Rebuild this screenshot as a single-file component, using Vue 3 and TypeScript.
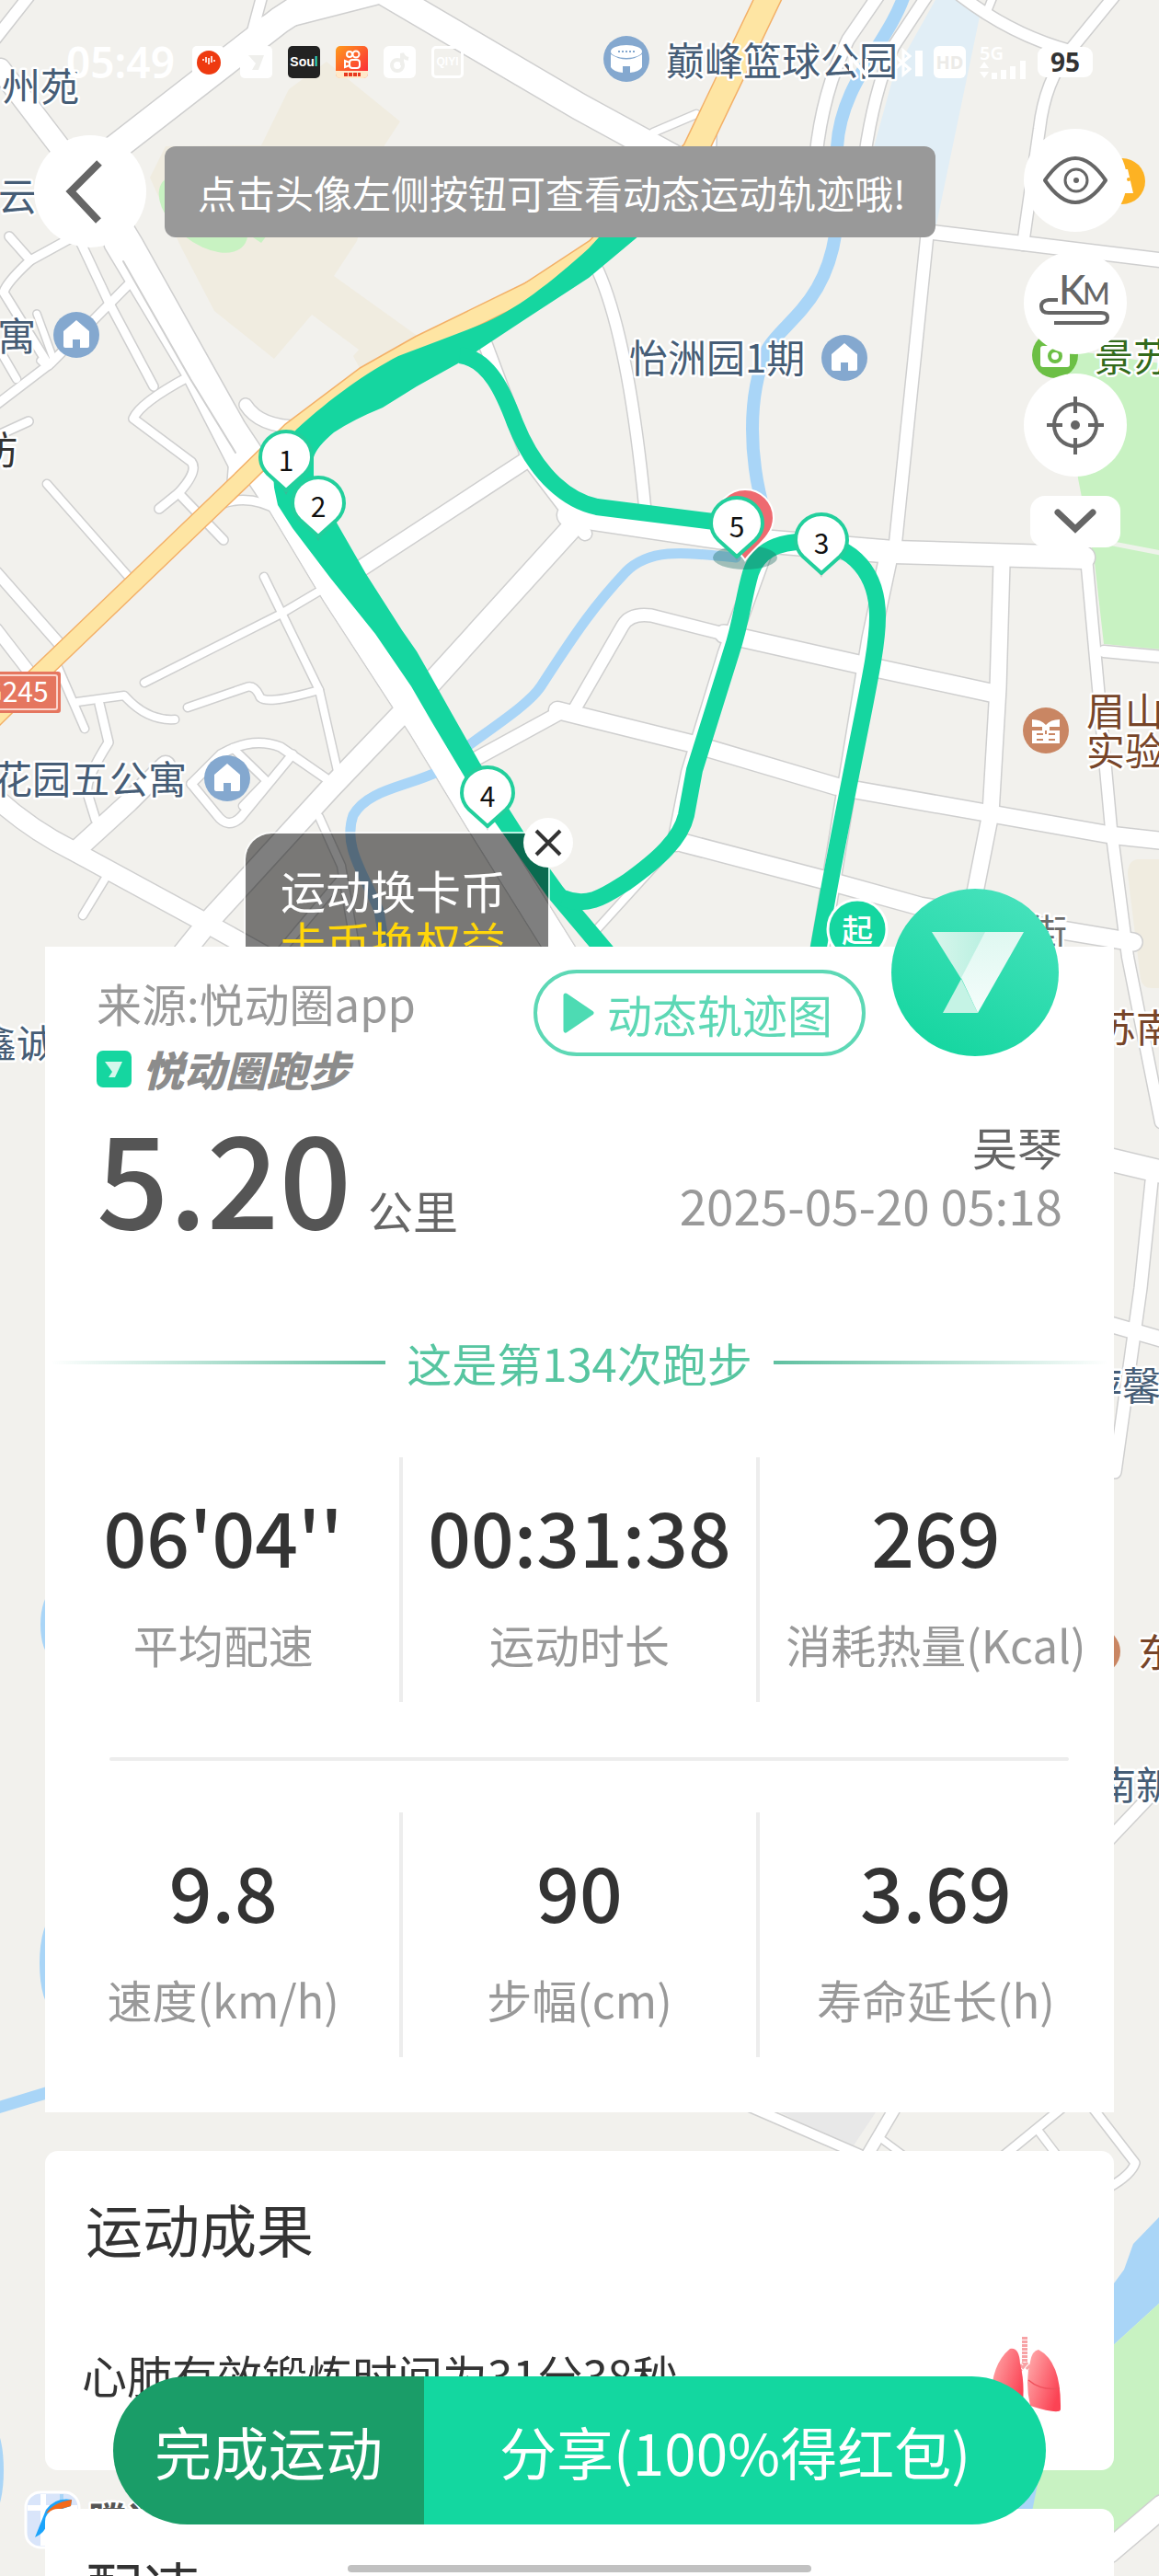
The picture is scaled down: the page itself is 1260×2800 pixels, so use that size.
<script setup lang="ts">
interface Road { d: string; w: number }
interface Label { x: number; y: number; text: string; tone: string }
interface Pin { x: number; y: number; n: number }
interface Stat { value: string; label: string }

const roads: Road[] = [
  { d: 'M32 -5L-5 42', w: 12 },
  { d: 'M285 -5L274 36', w: 11 },
  { d: 'M0 75L65 160L100 230', w: 22 },
  { d: 'M10 257L33 283Q6 308 4 318L53 397', w: 9 },
  { d: 'M75 260L33 283', w: 9 },
  { d: 'M40 341L58 390Q53 402 44 392', w: 7 },
  { d: 'M-4 440L55 395L143 306', w: 9 },
  { d: 'M-4 374L18 412', w: 8 },
  { d: 'M86 260L118 328L167 420', w: 9 },
  { d: 'M120 267L204 407L262 520', w: 12 },
  { d: 'M204 410Q152 438 145 455L208 502Q216 512 194 536L173 553', w: 9 },
  { d: 'M194 536L243 587', w: 9 },
  { d: 'M31 458L-4 474', w: 9 },
  { d: 'M267 440Q282 464 325 464', w: 13 },
  { d: 'M256 480L252 530', w: 10 },
  { d: 'M240 548Q272 536 305 556', w: 9 },
  { d: 'M51 526L139 626', w: 8 },
  { d: 'M-4 622L63 698', w: 11 },
  { d: 'M-4 684L30 728', w: 12 },
  { d: 'M62 723L92 792', w: 8 },
  { d: 'M84 763L135 756Q160 784 190 782', w: 8 },
  { d: 'M108 765L118 807Q92 848 95 862L104 891', w: 9 },
  { d: 'M157 742L304 668L353 639', w: 8 },
  { d: 'M287 627L347 750L367 838', w: 8 },
  { d: 'M204 769L268 747Q276 744 282 756Q284 768 347 750', w: 8 },
  { d: 'M208 852L240 820Q274 800 305 812L360 850', w: 9 },
  { d: 'M318 820L262 888Q248 902 236 886L208 852', w: 9 },
  { d: 'M253 813L290 849L264 876', w: 8 },
  { d: 'M180 832L140 872L82 925', w: 20 },
  { d: 'M-4 868Q34 902 78 924L229 1006L290 1040', w: 20 },
  { d: 'M118 949L90 995', w: 8 },
  { d: 'M347 888L371 941L388 1040', w: 8 },
  { d: 'M371 955L300 1040', w: 8 },
  { d: 'M392 618L571 501', w: 17 },
  { d: 'M528 375L575 500L636 580', w: 14 },
  { d: 'M634 560L469 742L359 857L229 999L196 1040', w: 22 },
  { d: 'M515 826L612 773', w: 14 },
  { d: 'M606 772L755 809L910 855L1069 883L1210 908L1264 914', w: 18 },
  { d: 'M624 772L677 680Q685 666 708 669L787 689', w: 13 },
  { d: 'M787 689L938 723L1077 753', w: 19 },
  { d: 'M742 916L906 959L1000 985L1232 1024', w: 19 },
  { d: 'M738 912L640 1020', w: 8 },
  { d: 'M650 294Q684 370 702 560', w: 12 },
  { d: 'M618 560L780 584L971 600L1178 606', w: 24 },
  { d: 'M830 600L790 710L750 840L735 916', w: 18 },
  { d: 'M1008 255L973 595', w: 13 },
  { d: 'M967 600L947 694L906 944L890 1040', w: 19 },
  { d: 'M1089 612L1085 748L1077 884L1057 985', w: 17 },
  { d: 'M1181 606L1208 901L1226 1040L1262 1220', w: 12 },
  { d: 'M1200 708L1264 714', w: 12 },
  { d: 'M1010 252L1264 283', w: 15 },
  { d: 'M1163 55Q1136 88 1130 140L1112 266', w: 12 },
  { d: 'M1044 -5Q1100 38 1163 55L1212 -5', w: 12 },
  { d: 'M1074 10L1080 -5', w: 8 },
  { d: 'M955 -5L922 43Q894 100 887 170', w: 13 },
  { d: 'M1008 -5L971 51Q950 100 940 170', w: 12 },
  { d: 'M710 144L757 124', w: 8 },
  { d: 'M775 130L774 170', w: 8 },
  { d: 'M1205 1260L1264 1274', w: 24 },
  { d: 'M1252 1284L1240 1400L1212 1600', w: 13 },
  { d: 'M1205 1439L1264 1456', w: 16 },
  { d: 'M1205 2000L1262 1940', w: 13 },
  { d: 'M815 2290L935 2342', w: 10 },
  { d: 'M975 2288L942 2344', w: 12 },
  { d: 'M957 2324L984 2344', w: 7 },
  { d: 'M1156 2290L1090 2344', w: 9 },
  { d: 'M1128 2315L1150 2344', w: 8 },
  { d: 'M1187 2290L1234 2351Q1230 2364 1205 2378', w: 9 },
  { d: 'M1205 2774L1264 2724', w: 24 }
]

const wideRoads: Road[] = [
  { d: 'M98 182L304 22L350 -8', w: 28 },
  { d: 'M290 26L415 -6', w: 18 },
  { d: 'M412 -12L630 116L740 176', w: 28 },
  { d: 'M108 215L140 268L252 468L300 540', w: 32 },
  { d: 'M284 510L365 645L458 788L520 890L620 1050', w: 30 }
]

const yellowRoads: Road[] = [
  { d: 'M838 -8L755 165L650 272L580 318', w: 26 },
  { d: 'M650 272L580 314L457 374L397 408L316 469L264 520L40 735L-20 794', w: 18 }
]

const track = [
  'M500 386C532 390 548 428 560 460C584 520 620 545 649 551L800 570',
  'M612 976C640 988 660 972 681 959C716 934 740 912 746 886L755 837L795 709C806 676 808 650 816 623C826 592 858 588 881 589C930 592 954 626 954 670C954 712 940 760 902 962L888 1040'
]

const labels: Label[] = [
  { x: 724, y: 82, text: '巅峰篮球公园', tone: 'blue' },
  { x: 2, y: 110, text: '州苑', tone: 'blue' },
  { x: -44, y: 229, text: '凌云', tone: 'blue' },
  { x: -3, y: 381, text: '寓', tone: 'blue' },
  { x: -23, y: 505, text: '坊', tone: 'dark' },
  { x: 684, y: 405, text: '怡洲园1期', tone: 'blue' },
  { x: -7, y: 863, text: '花园五公寓', tone: 'blue' },
  { x: 1190, y: 404, text: '景苏', tone: 'green' },
  { x: 1181, y: 789, text: '眉山', tone: 'brown' },
  { x: 1181, y: 832, text: '实验', tone: 'brown' },
  { x: 1118, y: 1030, text: '街', tone: 'grey' },
  { x: 1193, y: 1133, text: '苏南', tone: 'brown' },
  { x: -24, y: 1150, text: '鑫诚', tone: 'blue' },
  { x: 1178, y: 1522, text: '萍馨', tone: 'blue' },
  { x: 1237, y: 1812, text: '东', tone: 'brown' },
  { x: 1193, y: 1956, text: '南新', tone: 'blue' }
]

const homes = [[83, 364], [918, 389], [247, 846]]

const pins: Pin[] = [
  { x: 311, y: 498, n: 1 },
  { x: 346, y: 548, n: 2 },
  { x: 893, y: 588, n: 3 },
  { x: 530, y: 863, n: 4 },
  { x: 801, y: 570, n: 5 }
]

const statRows: Stat[][] = [
  [
    { value: "06'04''", label: '平均配速' },
    { value: '00:31:38', label: '运动时长' },
    { value: '269', label: '消耗热量(Kcal)' }
  ],
  [
    { value: '9.8', label: '速度(km/h)' },
    { value: '90', label: '步幅(cm)' },
    { value: '3.69', label: '寿命延长(h)' }
  ]
]
</script>

<template>
  <div class="screen">
    <svg class="map" viewBox="0 0 1260 2800" preserveAspectRatio="xMidYMin slice" aria-hidden="true">
      <!-- land use -->
      <path fill="#f0ece0" d="M355 67L435 132L418 158L388 262L363 300L455 366L392 402L384 387L390 380L339 342L298 390L233 338L196 267L163 193L180 159L284 158L314 97Z" />
      <ellipse cx="221" cy="232" rx="56" ry="32" transform="rotate(38 221 232)" fill="#c8f2c2" />
      <path fill="#c8f2c2" d="M272 256L284 264L290 256Z" />
      <path fill="#e1eef6" d="M1018 -2H1042L1065 18L1018 244H980L950 160L972 80Z" />
      <path fill="#c8f2c2" d="M1160 380L1262 395V706L1200 700L1190 612L1172 520Z" />
      <path d="M1205 590L1262 601" stroke="#eef3ea" stroke-width="5" />
      <path fill="#f0ece0" d="M1262 934H1236Q1226 936 1226 950L1240 1064Q1242 1074 1252 1074H1262Z" />
      <path fill="#e8e8e8" d="M836 2290H956L926 2335Z" />
      <path fill="#a9d5f7" d="M1262 2408L1232 2439L1222 2467L1205 2490L1090 2700V2740H1124L1150 2660L1205 2554L1262 2502Z" />
      <path fill="#c8f2c2" d="M1262 2502L1205 2554L1134 2670L1121 2735L1200 2780L1262 2715Z" />

      <!-- streets -->
      <g fill="none" stroke-linecap="round" stroke-linejoin="round">
        <path v-for="r in roads" :key="'c' + r.d" :d="r.d" :stroke-width="r.w + 3" stroke="#cfcfcf" />
        <path v-for="r in wideRoads" :key="'c' + r.d" :d="r.d" :stroke-width="r.w + 3" stroke="#cfcfcf" />
        <path v-for="r in roads" :key="'f' + r.d" :d="r.d" :stroke-width="r.w" stroke="#fff" />
        <path v-for="r in wideRoads" :key="'f' + r.d" :d="r.d" :stroke-width="r.w" stroke="#fff" />
        <path d="M134 284L207 412L256 492" stroke="#cfcfcf" stroke-width="2" />
        <!-- water -->
        <g stroke="#a9d5f7">
          <path d="M983 -5C965 48 914 90 910 160V240C902 330 850 350 834 380C812 430 814 500 832 560" stroke-width="14" />
          <path d="M800 606C740 600 706 596 680 622C648 656 628 684 588 746C572 770 520 800 478 834" stroke-width="11" />
          <path d="M478 838C440 856 400 858 384 886C372 920 396 950 412 990L420 1040" stroke-width="11" />
          <path d="M-6 2292L60 2272" stroke-width="13" />
        </g>
        <path d="M284 510L365 645L458 788L520 890L620 1050" stroke="#fff" stroke-width="30" />
        <path v-for="r in yellowRoads" :key="'c' + r.d" :d="r.d" :stroke-width="r.w + 3" stroke="#f3b068" />
        <path v-for="r in yellowRoads" :key="'f' + r.d" :d="r.d" :stroke-width="r.w" stroke="#fee5a3" />
      </g>
      <ellipse cx="56" cy="1766" rx="12" ry="34" fill="#a9d5f7" />
      <ellipse cx="58" cy="2134" rx="15" ry="50" fill="#a9d5f7" />
      <ellipse cx="-6" cy="2685" rx="10" ry="44" fill="#a9d5f7" />

      <!-- road number -->
      <g>
        <rect x="-20" y="730" width="86" height="45" rx="3" fill="#e5765f" />
        <rect x="-20" y="734" width="82" height="37" rx="2" fill="none" stroke="#fbd5cc" stroke-width="2" />
        <text x="-18" y="763" font-size="30" fill="#fff">G245</text>
      </g>

      <!-- points of interest -->
      <g v-for="h in homes" :key="h[0]" :transform="`translate(${h[0]} ${h[1]})`">
        <circle r="25" fill="#84a8cf" />
        <path d="M0 -16L14 -4V12Q14 14 12 14H4V5H-4V14H-12Q-14 14 -14 12V-4Z" fill="#fff" />
      </g>
      <g transform="translate(681 64)">
        <circle r="25" fill="#84a8cf" />
        <path d="M-17 -5V9Q-14 14 -4 15V8H4V15Q14 14 17 9V-5Q0 6 -17 -5Z" fill="#fff" />
        <ellipse cy="-8" rx="17" ry="7" fill="#fff" />
        <path d="M-9 -8H9" stroke="#84a8cf" stroke-width="2" stroke-dasharray="2 2" />
      </g>
      <g transform="translate(1147 386)">
        <circle r="25" fill="#6cbf45" />
        <rect x="-16" y="-10" width="32" height="23" rx="3" fill="#fff" />
        <circle cy="1" r="6" fill="none" stroke="#6cbf45" stroke-width="4" />
      </g>
      <g transform="translate(1137 794)">
        <circle r="25" fill="#c98663" />
        <path d="M-15 -12Q-5 -12 0 -6Q5 -12 15 -12V-4H4V0H15V14H-15V0H-4V-4H-15Z" fill="#fff" />
        <path d="M-10 4H-3M3 4H10M-10 10H-3M3 10H10M0 0V4" stroke="#c98663" stroke-width="2" />
      </g>
      <circle cx="1220" cy="197" r="25" fill="#fdb223" />
      <path d="M1214 184H1226L1232 210H1214Z" fill="#fff" />
      <circle cx="1227" cy="195" r="2" fill="#fdb223" />
      <circle cx="1193" cy="1795" r="25" fill="#c98663" />

      <g class="labels">
        <text v-for="l in labels" :key="l.text" :x="l.x" :y="l.y" :class="l.tone">{{ l.text }}</text>
        <text x="96" y="2756" class="brand">腾讯地图</text>
      </g>
      <g>
        <rect x="28" y="2709" width="58" height="60" rx="16" fill="#d9e5fa" stroke="#fff" stroke-width="3" />
        <path d="M47 2711V2767M30 2726H84" stroke="#fff" stroke-width="6" />
        <path d="M67 2711V2727" stroke="#a9d5f7" stroke-width="4" />
        <path d="M38 2758L50 2728Q60 2714 78 2717L77 2724Q60 2728 54 2740Q48 2754 38 2758Z" fill="#1ba4fb" />
        <path d="M50 2732Q58 2720 78 2717L77 2724Q62 2728 50 2732Z" fill="#f26a1b" />
      </g>

      <!-- recorded run -->
      <g fill="#15d6a0">
        <path d="M651 258L640 270C600 306 560 338 522 353L478 370L433 387C400 404 360 432 322 467L296 500L298 530L302 549L318 574L359 628L408 689L447 746L469 784L506 846L539 895L596 976L650 1040H676L612 964L571 907L522 830L492 777L465 729L453 708L437 685L398 624L367 570L341 518V497Q344 486 363 470Q384 456 416 443L453 420L498 395L518 382L571 347L640 302L695 256Z" />
        <g fill="none" stroke="#15d6a0" stroke-width="18">
          <path v-for="t in track" :key="t" :d="t" />
        </g>
      </g>
      <ellipse cx="810" cy="606" rx="35" ry="13" fill="#1b6b60" opacity=".38" />
      <path d="M810 609C802 596 779 584 779 563A31 31 0 0 1 841 563C841 584 818 596 810 609Z" fill="#ee6a70" stroke="#fff" stroke-width="2" />
      <g v-for="p in pins" :key="p.n" :transform="`translate(${p.x} ${p.y})`">
        <path d="M0 40C-5 26 -29 17 -29 -1A29 29 0 0 1 29 -1C29 17 5 26 0 40Z" fill="#7d8a86" opacity=".35" />
        <path d="M0 35L-20 17C-25 12 -28 6 -28 -1A28 28 0 0 1 28 -1C28 6 25 12 20 17Z" fill="#fff" stroke="#22cf9c" stroke-width="4" stroke-linejoin="round" />
        <text y="14" font-size="30" text-anchor="middle" fill="#111">{{ p.n }}</text>
      </g>
      <circle cx="932" cy="1010" r="32" fill="#15d6a0" stroke="#fff" stroke-width="3" />
      <text x="932" y="1024" font-size="34" font-weight="500" text-anchor="middle" fill="#fff">起</text>
    </svg>

    <div class="stage">
      <header class="status">
        <time class="clock">05:49</time>
        <svg class="app" viewBox="0 0 35 35"><rect width="35" height="35" rx="5" fill="#fff" /><circle cx="18" cy="18" r="13" fill="#ee3a10" /><path d="M12 14V16M15 12V18M18 13V20M21 11V18M24 15V17" stroke="#fff" stroke-width="1.6" /></svg>
        <svg class="app" viewBox="0 0 35 35"><rect width="35" height="35" rx="5" fill="#fff" /><path d="M9 10H26L20 26H13L17 19Z" fill="#efefec" /></svg>
        <span class="app soul">Sou<i>l</i></span>
        <svg class="app" viewBox="0 0 35 35"><defs><linearGradient id="ks" x1="0" y1="0" x2="1" y2="1"><stop offset="0" stop-color="#ff9b1c" /><stop offset="1" stop-color="#fb1f3c" /></linearGradient></defs><rect width="35" height="35" rx="5" fill="url(#ks)" /><g fill="none" stroke="#fff" stroke-width="2"><circle cx="15" cy="9" r="3" /><circle cx="22" cy="9" r="3.5" /><rect x="15" y="15" width="11" height="9" rx="3" /><path d="M15 18L10 16V23L15 21" /></g><path d="M0 27H35V30Q35 35 30 35H5Q0 35 0 30Z" fill="#ffe9c9" /><path d="M9 31H27" stroke="#e8391e" stroke-width="4" stroke-dasharray="4 1" /></svg>
        <svg class="app" viewBox="0 0 35 35"><rect width="35" height="35" rx="6" fill="#fff" /><circle cx="15" cy="21" r="6" fill="none" stroke="#efefec" stroke-width="4" /><path d="M20 21V8Q22 13 27 14" fill="none" stroke="#efefec" stroke-width="4" /></svg>
        <span class="app qiyi">QIYI</span>
        <svg class="radio" viewBox="0 0 88 35" fill="none" stroke="#fff"><path d="M9 12V27M9 12L26 32V14" stroke-width="4" /><path d="M58 12L73 25L66 31V5L73 11L58 24" stroke-width="3" /><path d="M83 5V33" stroke-width="8" /></svg>
        <span class="hd">HD</span>
        <span class="signal"><b>5G</b><svg viewBox="0 0 52 20"><path d="M0 8L5 1L10 8ZM0 12L5 19L10 12Z" fill="#fff" /><path d="M16 20V13M26 20V10M36 20V6M47 20V0" stroke="#fff" stroke-width="6" /></svg></span>
        <span class="battery">95</span>
      </header>

      <div class="toolbar">
        <button class="round back" aria-label="返回">
          <svg viewBox="0 0 122 122"><path d="M71 30L40 61L70 93" fill="none" stroke="#666" stroke-width="8" /></svg>
        </button>
        <p class="toast">点击头像左侧按钮可查看动态运动轨迹哦!</p>
        <div class="tools">
          <button class="round" aria-label="显示地图">
            <svg viewBox="0 0 112 112" fill="none" stroke="#666" stroke-width="4"><path d="M23 56Q56 8 89 56Q56 104 23 56Z" stroke-linejoin="round" /><circle cx="57" cy="56" r="12" stroke-width="3" /><circle cx="57" cy="56" r="3" fill="#666" stroke="none" /></svg>
          </button>
          <button class="round" aria-label="公里标记">
            <svg viewBox="0 0 112 112"><g fill="#666" font-family="Lato, sans-serif" font-weight="500"><text x="38" y="58" font-size="44">K</text><text x="64" y="58" font-size="32">M</text></g><path d="M37 53H27Q19 54 19 60Q19 67 27 67H84Q91 67 91 72Q91 78 84 78H33" fill="none" stroke="#666" stroke-width="4" /></svg>
          </button>
          <button class="round" aria-label="定位">
            <svg viewBox="0 0 112 112" fill="none" stroke="#666" stroke-width="4"><circle cx="56" cy="56" r="23" /><path d="M56 25V43M56 70V88M25 56H42M70 56H87" /><circle cx="56" cy="56" r="5" fill="#666" stroke="none" /></svg>
          </button>
          <button class="more" aria-label="展开">
            <svg viewBox="0 0 98 56"><path d="M30 18L49 36L68 18" fill="none" stroke="#666" stroke-width="7" stroke-linecap="round" /></svg>
          </button>
        </div>
      </div>

      <aside class="promo">
        <p>运动换卡币</p>
        <p class="gold">卡币换权益</p>
        <button class="close" aria-label="关闭">
          <svg viewBox="0 0 54 54"><path d="M14 14L40 40M40 14L14 40" stroke="#333" stroke-width="4" /></svg>
        </button>
      </aside>
    </div>

    <main>
      <section class="summary">
        <div class="head">
          <div class="origin">
            <p class="source">来源:悦动圈app</p>
            <p class="logo">
              <svg viewBox="0 0 38 40"><rect width="38" height="40" rx="7" fill="#15d6a0" /><path d="M9 12H28L20 29H13L17 23Z" fill="#d6f8ec" /></svg>
              悦动圈跑步
            </p>
          </div>
          <button class="replay">
            <svg viewBox="0 0 34 44"><path d="M3 3L31 22L3 41Z" fill="#4ddbb3" stroke="#4ddbb3" stroke-width="5" stroke-linejoin="round" /></svg>
            动态轨迹图
          </button>
          <svg class="avatar" viewBox="0 0 182 182" role="img" aria-label="头像">
            <defs>
              <linearGradient id="av" x1=".8" y1="0" x2=".3" y2="1"><stop offset="0" stop-color="#48e2bd" /><stop offset="1" stop-color="#15d6a0" /></linearGradient>
              <linearGradient id="v1" x1="0" y1="0" x2="1" y2="0"><stop offset="0" stop-color="#d8f6ec" /><stop offset="1" stop-color="#b5efdf" /></linearGradient>
              <linearGradient id="v2" x1="0" y1="0" x2="0" y2="1"><stop offset="0" stop-color="#dff8f1" /><stop offset="1" stop-color="#f5fdfb" /></linearGradient>
            </defs>
            <circle cx="91" cy="91" r="91" fill="url(#av)" />
            <path d="M44 47H110L76 98Z" fill="url(#v1)" />
            <path d="M76 98L94 135H56Z" fill="#c5f3e5" />
            <path d="M102 47H144L94 135L76 97Z" fill="url(#v2)" />
          </svg>
        </div>

        <div class="result">
          <p class="distance"><strong>5.20</strong><span>公里</span></p>
          <div class="who">
            <p>吴琴</p>
            <time>2025-05-20 05:18</time>
          </div>
        </div>

        <p class="milestone">这是第134次跑步</p>

        <template v-for="(row, i) in statRows" :key="i">
          <hr v-if="i > 0" />
          <dl class="stats">
            <div v-for="s in row" :key="s.label">
              <dd>{{ s.value }}</dd>
              <dt>{{ s.label }}</dt>
            </div>
          </dl>
        </template>
      </section>

      <section class="card">
        <h2>运动成果</h2>
        <div class="effect">
          <p>心肺有效锻炼时间为31分38秒</p>
          <svg viewBox="0 0 78 84" aria-hidden="true">
            <defs><linearGradient id="lung" x1="0" y1="0" x2="1" y2=".6"><stop offset="0" stop-color="#ffb0b0" /><stop offset="1" stop-color="#fb4354" /></linearGradient></defs>
            <path d="M38 1V30L32 37M38 30L45 37" stroke="#f7a3a6" stroke-width="6" fill="none" stroke-dasharray="3 1" />
            <path d="M22 14Q32 12 33 30Q38 50 36 72Q20 82 2 82Q-2 34 22 14Z" fill="url(#lung)" />
            <path d="M53 15Q78 28 77 80Q76 86 44 76Q38 50 44 28Q46 16 53 15Z" fill="url(#lung)" />
            <path d="M42 48Q56 60 76 57" stroke="#f0505c" stroke-width="1.5" fill="none" />
          </svg>
        </div>
      </section>

      <section class="card">
        <h2>配速</h2>
      </section>
    </main>

    <nav class="actions">
      <button class="finish">完成运动</button>
      <button class="share">分享(100%得红包)</button>
    </nav>
    <div class="home-bar"></div>
  </div>
</template>

<style>
body {
  margin: 0;
}
</style>

<style scoped>
.screen {
  position: relative;
  height: 100vh;
  overflow: hidden;
  background: #f2f1ed;
  font-family: "Noto Sans CJK SC", "Noto Sans", sans-serif;
  color: #333;
}
p, h2, dl, dd, dt { margin: 0; font-weight: 400; }
button {
  padding: 0;
  border: 0;
  font: inherit;
  cursor: pointer;
}
.map {
  position: absolute;
  inset: 0;
  width: 100%;
  height: 100%;
}
.labels text {
  font-size: 42px;
  paint-order: stroke;
  stroke: #fff;
  stroke-width: 5px;
  stroke-linejoin: round;
}
.labels .blue { fill: #465d76; }
.labels .dark { fill: #333; }
.labels .green { fill: #336b1c; }
.labels .brown { fill: #774529; }
.labels .grey { fill: #6b6b6b; }
.labels .brand { fill: #555; font-weight: 700; }

.stage {
  position: relative;
  height: 1029px;
  overflow: hidden;
}
.status {
  display: flex;
  align-items: center;
  height: 35px;
  padding: 50px 72px 0;
  color: #fff;
}
.clock {
  width: 137px;
  font-family: "Noto Sans", sans-serif;
  font-size: 46px;
  line-height: 35px;
  font-weight: 600;
}
.app {
  flex: none;
  box-sizing: border-box;
  width: 35px;
  height: 35px;
  margin-right: 17px;
  overflow: hidden;
}
.soul, .qiyi {
  border-radius: 5px;
  font-family: "Liberation Sans", sans-serif;
  font-size: 14px;
  line-height: 35px;
  text-align: center;
}
.soul { background: #222; font-weight: 700; }
.soul i { color: #2fd6c0; font-style: normal; }
.qiyi { border: 3px solid #fff; line-height: 29px; font-size: 12px; font-weight: 700; }
.radio { width: 88px; height: 35px; margin-left: auto; }
.hd {
  width: 35px;
  margin: 0 15px 0 11px;
  border-radius: 6px;
  background: #fff;
  color: #ecebe8;
  font-family: "Noto Sans", sans-serif;
  font-size: 20px;
  line-height: 35px;
  font-weight: 700;
  text-align: center;
}
.signal { width: 52px; margin-right: 11px; }
.signal b, .signal svg { display: block; }
.signal b { font-family: "Noto Sans", sans-serif; font-size: 20px; line-height: 16px; font-weight: 600; }
.signal svg { height: 20px; }
.battery {
  width: 60px;
  border-radius: 9px;
  background: #fff;
  color: #333;
  font-family: "Noto Sans", sans-serif;
  font-size: 28px;
  line-height: 33px;
  font-weight: 700;
  text-align: center;
}

.toolbar {
  display: flex;
  align-items: flex-start;
  padding: 55px 35px 0 37px;
}
.round {
  width: 112px;
  height: 112px;
  border-radius: 50%;
  background: #fff;
}
.round svg, .more svg, .close svg { display: block; width: 100%; }
.back {
  flex: none;
  width: 122px;
  height: 122px;
  margin-top: 7px;
}
.toast {
  margin: 19px 0 0 20px;
  padding: 0 32px 0 36px;
  border-radius: 12px;
  background: #999;
  color: #fff;
  font-size: 42px;
  line-height: 99px;
  white-space: nowrap;
}
.tools {
  display: flex;
  flex-direction: column;
  align-items: center;
  gap: 21px;
  margin-left: auto;
}
.more {
  width: 98px;
  height: 56px;
  border-radius: 16px;
  background: #fff;
}
.promo {
  position: absolute;
  left: 265px;
  bottom: -40px;
  padding: 33px 46px 16px 38px;
  border: 2px solid rgba(255, 255, 255, .7);
  border-radius: 30px 0 0 30px;
  background: rgba(0, 0, 0, .5);
  background-clip: padding-box;
  color: #fff;
  font-size: 49px;
  line-height: 56px;
}
.gold { color: #ffd60a; }
.close {
  position: absolute;
  top: -17px;
  right: -27px;
  width: 54px;
  height: 54px;
  border-radius: 50%;
  background: #fff;
}

main {
  position: relative;
  margin: 0 49px;
}
.summary {
  padding: 25px 0 60px;
  background: #fff;
}
.head {
  display: flex;
  align-items: flex-start;
  padding: 0 60px 0 56px;
}
.origin { flex: 1; }
.source {
  color: #999;
  font-size: 49px;
  line-height: 72px;
}
.logo {
  display: flex;
  align-items: center;
  gap: 12px;
  height: 40px;
  margin-top: 16px;
  color: #8c8c8c;
  font-size: 45px;
  font-style: italic;
  font-weight: 900;
  line-height: 40px;
}
.logo svg { width: 38px; height: 40px; }
.replay {
  display: flex;
  align-items: center;
  gap: 14px;
  box-sizing: border-box;
  height: 94px;
  margin-right: 28px;
  padding: 0 32px 0 28px;
  border: 4px solid #5dd8b5;
  border-radius: 47px;
  background: #fff;
  color: #5dd8b5;
  font-size: 49px;
  white-space: nowrap;
}
.replay svg { width: 34px; height: 44px; }
.avatar {
  flex: none;
  width: 182px;
  height: 182px;
  margin-top: -88px;
}
.result {
  display: flex;
  justify-content: space-between;
  align-items: flex-end;
  margin-top: 24px;
  padding: 0 56px;
}
.distance {
  display: flex;
  align-items: baseline;
  gap: 18px;
  height: 140px;
  color: #666;
  font-size: 49px;
}
.distance strong {
  color: #555;
  font-size: 138px;
  line-height: 140px;
  font-weight: 500;
}
.who {
  margin-bottom: 4px;
  color: #666;
  font-size: 49px;
  line-height: 60px;
  text-align: right;
}
.who time {
  display: block;
  color: #999;
  font-size: 53px;
  line-height: 66px;
}
.milestone {
  display: flex;
  align-items: center;
  gap: 23px;
  margin: 105px 6px 73px;
  color: #56c5a0;
  font-size: 49px;
  line-height: 60px;
}
.milestone::before, .milestone::after {
  content: "";
  flex: 1;
  height: 4px;
  background: linear-gradient(to right, transparent, #5fc0a0);
}
.milestone::after { background: linear-gradient(to left, transparent, #5fc0a0); }
.stats {
  display: grid;
  grid-template-columns: repeat(3, 1fr);
}
.stats div {
  display: flex;
  flex-direction: column;
  align-items: center;
  gap: 38px;
  padding: 35px 0 33px;
}
.stats div + div { box-shadow: -2px 0 #ededed, inset 2px 0 #ededed; }
dd {
  font-size: 82px;
  line-height: 100px;
  font-weight: 500;
}
dt {
  color: #999;
  font-size: 49px;
  line-height: 60px;
  white-space: nowrap;
}
hr {
  height: 4px;
  margin: 60px 49px 56px 70px;
  border: 0;
  border-radius: 2px;
  background: #ededed;
}
.card {
  margin-top: 42px;
  padding: 40px 57px 54px 44px;
  border-radius: 14px;
  background: #fff;
}
h2 {
  font-size: 62px;
  line-height: 88px;
}
.effect {
  display: flex;
  justify-content: space-between;
  align-items: center;
  margin-top: 65px;
  font-size: 49px;
  line-height: 100px;
}
.effect p { margin-left: -4px; }
.effect svg { width: 78px; height: 84px; }

.actions {
  position: absolute;
  right: 123px;
  bottom: 56px;
  left: 123px;
  display: flex;
  height: 161px;
  border-radius: 81px;
  overflow: hidden;
  font-size: 62px;
}
.finish, .share { color: #fff; }
.finish { flex: 1; background: #1a9d68; }
.share { flex: 2; background: #13d7a0; }
.home-bar {
  position: absolute;
  right: 30%;
  bottom: 4px;
  left: 30%;
  height: 8px;
  border-radius: 4px;
  background: #c1c1c1;
}
</style>
